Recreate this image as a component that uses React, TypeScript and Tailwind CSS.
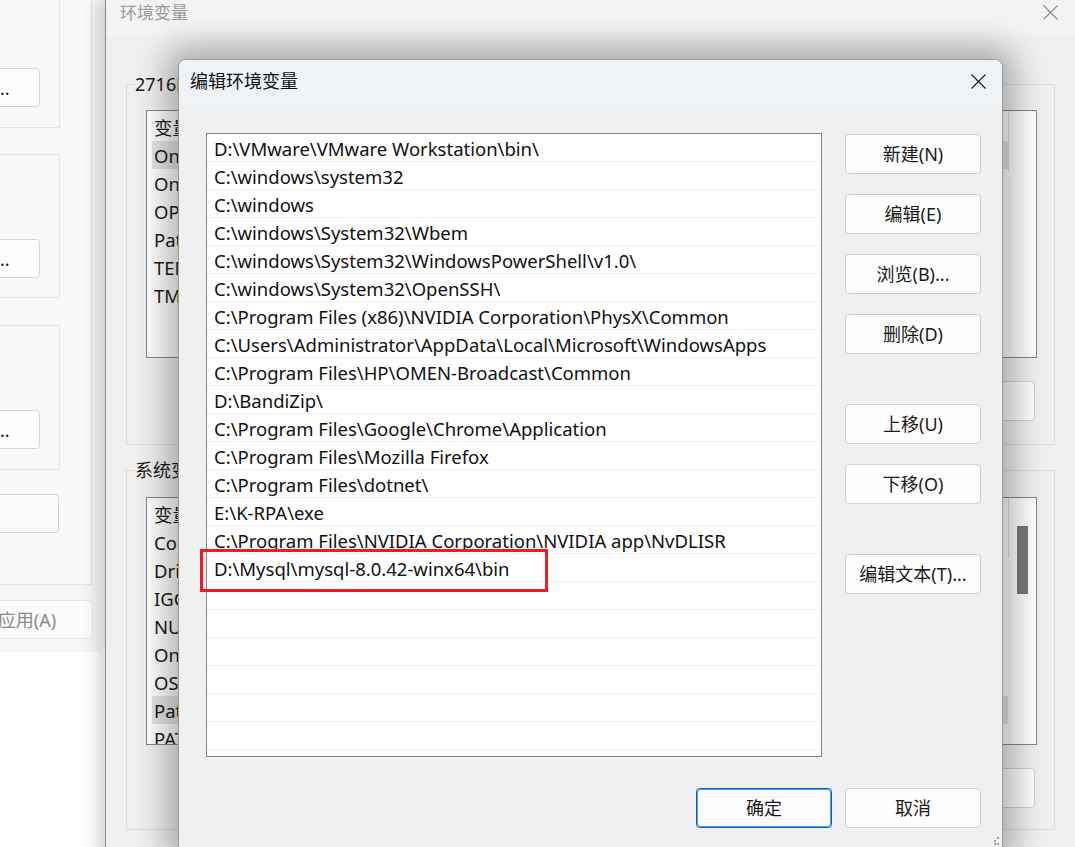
const ui = "font-['Noto_Sans','Noto_Sans_CJK_SC',sans-serif]";

const paths = [
  "D:\\VMware\\VMware Workstation\\bin\\",
  "C:\\windows\\system32",
  "C:\\windows",
  "C:\\windows\\System32\\Wbem",
  "C:\\windows\\System32\\WindowsPowerShell\\v1.0\\",
  "C:\\windows\\System32\\OpenSSH\\",
  "C:\\Program Files (x86)\\NVIDIA Corporation\\PhysX\\Common",
  "C:\\Users\\Administrator\\AppData\\Local\\Microsoft\\WindowsApps",
  "C:\\Program Files\\HP\\OMEN-Broadcast\\Common",
  "D:\\BandiZip\\",
  "C:\\Program Files\\Google\\Chrome\\Application",
  "C:\\Program Files\\Mozilla Firefox",
  "C:\\Program Files\\dotnet\\",
  "E:\\K-RPA\\exe",
  "C:\\Program Files\\NVIDIA Corporation\\NVIDIA app\\NvDLISR",
  "D:\\Mysql\\mysql-8.0.42-winx64\\bin",
  "", "", "", "", "", "",
];

const userVars = ["OneDrive", "OneDriveConsumer", "OPENSSL_CONF", "Path", "TEMP", "TMP"];
const sysVars = ["ComSpec", "DriverData", "IGCCSVC_DB", "NUMBER_OF_PROCESSORS", "OneDriveConsumer", "OS", "Path", "PATHEXT"];

const CloseIcon = ({ color = "#1a1a1a", size = 15 }: { color?: string; size?: number }) => (
  <svg width={size} height={size} viewBox="0 0 15 15">
    <path d="M0.5 0.5 L14.5 14.5 M14.5 0.5 L0.5 14.5" stroke={color} strokeWidth="1.1" fill="none" />
  </svg>
);

const WinButton = ({ label, className = "" }: { label: string; className?: string }) => (
  <button className={`w-[136px] h-[40px] shrink-0 rounded-[4px] border border-[#d0d0d0] bg-[#fdfdfd] text-[18px] text-[#1a1a1a] leading-none flex items-center justify-center whitespace-nowrap ${className}`}>
    {label}
  </button>
);

const GroupBox = ({ label, className, children }: { label: string; className: string; children: React.ReactNode }) => (
  <div className={`relative border border-[#dcdcdc] ${className}`}>
    <span className="absolute -top-[12px] left-[8px] bg-[#f0f0f0] text-[18px] leading-[22px] text-[#1a1a1a] whitespace-nowrap">{label}</span>
    {children}
  </div>
);

const VarList = ({ rows, selected, scrollbar }: { rows: string[]; selected: number; scrollbar?: boolean }) => (
  <div className="relative w-[891px] h-[248px] border border-[#828790] bg-white overflow-hidden pt-[2px]">
    <div className="flex h-[28px] items-center pl-[7px] pt-[1px] text-[18.5px] text-[#1a1a1a]">
      <span className="w-[300px]">变量</span>
      <span>值</span>
    </div>
    {rows.map((r, i) => (
      <div key={i} className={`flex h-[28px] items-center ml-[5px] mr-[28px] pl-[2px] pt-[1px] text-[18.5px] text-[#1a1a1a] whitespace-nowrap ${i === selected ? "bg-[#e5e5e5]" : ""}`}>
        {r}
      </div>
    ))}
    <div className="absolute top-0 right-0 w-[28px] h-full">
      <div className="absolute left-0 top-0 h-[60px] w-px bg-[#e0e0e0]" />
      {scrollbar && <div className="absolute left-[9px] top-[28px] w-[11px] h-[68px] bg-[#7a7a7a]" />}
    </div>
  </div>
);

const SideButton = ({ label }: { label: string }) => (
  <button className="w-[132px] h-[39px] shrink-0 rounded-[4px] border border-[#d5d5d5] bg-[#fdfdfd] text-[18px] text-[#1a1a1a] leading-none whitespace-nowrap">
    {label}
  </button>
);

const SystemWindow = () => (
  <div className="absolute left-[-300px] top-0 w-[405px] h-[652px] bg-[#f5f5f5] rounded-br-[8px] overflow-hidden">
    <div className="w-[392px] h-[585px] border-r border-b border-[#e3e3e3] bg-[#f9f9f9] flex flex-col">
      <div className="ml-[20px] w-[340px] h-[128px] border-x border-b border-[#e5e5e5] flex justify-end pr-[19px] pt-[68px]">
        <SideButton label="设置(S)..." />
      </div>
      <div className="ml-[20px] mt-[26px] w-[340px] h-[144px] border border-[#e5e5e5] flex justify-end pr-[19px] pt-[84px]">
        <SideButton label="设置(E)..." />
      </div>
      <div className="ml-[20px] mt-[27px] w-[340px] h-[145px] border border-[#e5e5e5] flex justify-end pr-[19px] pt-[84px]">
        <SideButton label="设置(T)..." />
      </div>
      <div className="ml-[20px] mt-[24px] w-[339px] h-[39px] rounded-[4px] border border-[#d5d5d5] bg-[#fbfbfb]" />
    </div>
    <button className="mt-[15px] ml-[261px] w-[132px] h-[39px] rounded-[4px] border border-[#e5e5e5] bg-[#fbfbfb] text-[18px] text-[#8a8a8a] leading-none">
      应用(A)
    </button>
  </div>
);

const EnvWindow = () => (
  <div className="absolute left-[105px] top-0 w-[1000px] h-[900px] border-l border-[#8a8a8a] bg-[#f0f0f0] shadow-[-8px_0_14px_rgba(0,0,0,0.16)]">
    <div className="h-[35px] bg-[#f3f3f3] flex items-start justify-between pl-[14px] pr-[47px] pt-[1px]">
      <span className="text-[17px] leading-[24px] text-[#9a9a9a]">环境变量</span>
      <div className="pt-[4px]">
        <CloseIcon color="#8b8b8b" size={15} />
      </div>
    </div>
    <div className="pl-[20px] pt-[49px] flex flex-col">
      <GroupBox label="2716的用户变量(U)" className="w-[929px] h-[361px] pl-[19px] pt-[25px]">
        <VarList rows={userVars} selected={0} />
        <div className="flex justify-end gap-[13px] mt-[23px] w-[889px]">
          <WinButton label="新建(N)..." className="h-[39px]" />
          <WinButton label="编辑(E)..." className="h-[39px]" />
          <WinButton label="删除(D)" className="h-[39px]" />
        </div>
      </GroupBox>
      <GroupBox label="系统变量(S)" className="mt-[25px] w-[929px] h-[360px] pl-[19px] pt-[26px]">
        <VarList rows={sysVars} selected={6} scrollbar />
        <div className="flex justify-end gap-[13px] mt-[23px] w-[889px]">
          <WinButton label="新建(W)..." className="h-[39px]" />
          <WinButton label="编辑(I)..." className="h-[39px]" />
          <WinButton label="删除(L)" className="h-[39px]" />
        </div>
      </GroupBox>
    </div>
  </div>
);

const EditDialog = () => (
  <div className="absolute left-[178px] top-[59px] w-[825px] h-[790px] rounded-t-[8px] border border-[#9c9c9c] bg-[#f0f0f0] shadow-[0_0_32px_12px_rgba(0,0,0,0.3)] overflow-hidden">
    <div className="h-[43px] bg-[#eef3f8] flex items-center justify-between pl-[11px] pr-[16px]">
      <span className="text-[18px] text-[#111]">编辑环境变量</span>
      <CloseIcon />
    </div>
    <div className="flex pl-[27px] pt-[30px]">
      <div className="w-[616px] h-[624px] border border-[#828790] bg-white overflow-hidden">
        {paths.map((p, i) => (
          <div key={i} className="h-[28px] border-b border-[#f0f0f0] flex items-center pl-[7px] pt-[2px] text-[18.5px] text-[#111] whitespace-nowrap">
            {p}
          </div>
        ))}
      </div>
      <div className="ml-[23px] pt-[1px] flex flex-col">
        <WinButton label="新建(N)" />
        <WinButton label="编辑(E)" className="mt-[20px]" />
        <WinButton label="浏览(B)..." className="mt-[20px]" />
        <WinButton label="删除(D)" className="mt-[20px]" />
        <WinButton label="上移(U)" className="mt-[50px]" />
        <WinButton label="下移(O)" className="mt-[20px]" />
        <WinButton label="编辑文本(T)..." className="mt-[50px]" />
      </div>
    </div>
    <div className="flex justify-end gap-[13px] pr-[21px] mt-[31px]">
      <button className="w-[136px] h-[40px] rounded-[4px] border border-[#0067c0] shadow-[inset_0_0_0_1px_#5a9ee0] bg-[#fdfdfd] text-[18px] text-[#1a1a1a] leading-none">
        确定
      </button>
      <WinButton label="取消" />
    </div>
    <div className="absolute left-[21px] top-[489px] w-[348px] h-[43px] border-[3px] border-[#ed1c24]" />
    <div className="absolute right-[3px] bottom-[3px] w-[8px] h-[8px]">
      <div className="absolute right-0 top-0 w-[2px] h-[2px] bg-[#a0a0a0]" />
      <div className="absolute right-0 bottom-0 w-[2px] h-[2px] bg-[#a0a0a0]" />
      <div className="absolute right-[3px] bottom-0 w-[2px] h-[2px] bg-[#a0a0a0]" />
      <div className="absolute right-[3px] top-[3px] w-[2px] h-[2px] bg-[#a0a0a0]" />
    </div>
  </div>
);

export default function App() {
  return (
    <div className={`relative w-[1075px] h-[847px] overflow-hidden bg-white ${ui}`}>
      <SystemWindow />
      <EnvWindow />
      <EditDialog />
    </div>
  );
}
